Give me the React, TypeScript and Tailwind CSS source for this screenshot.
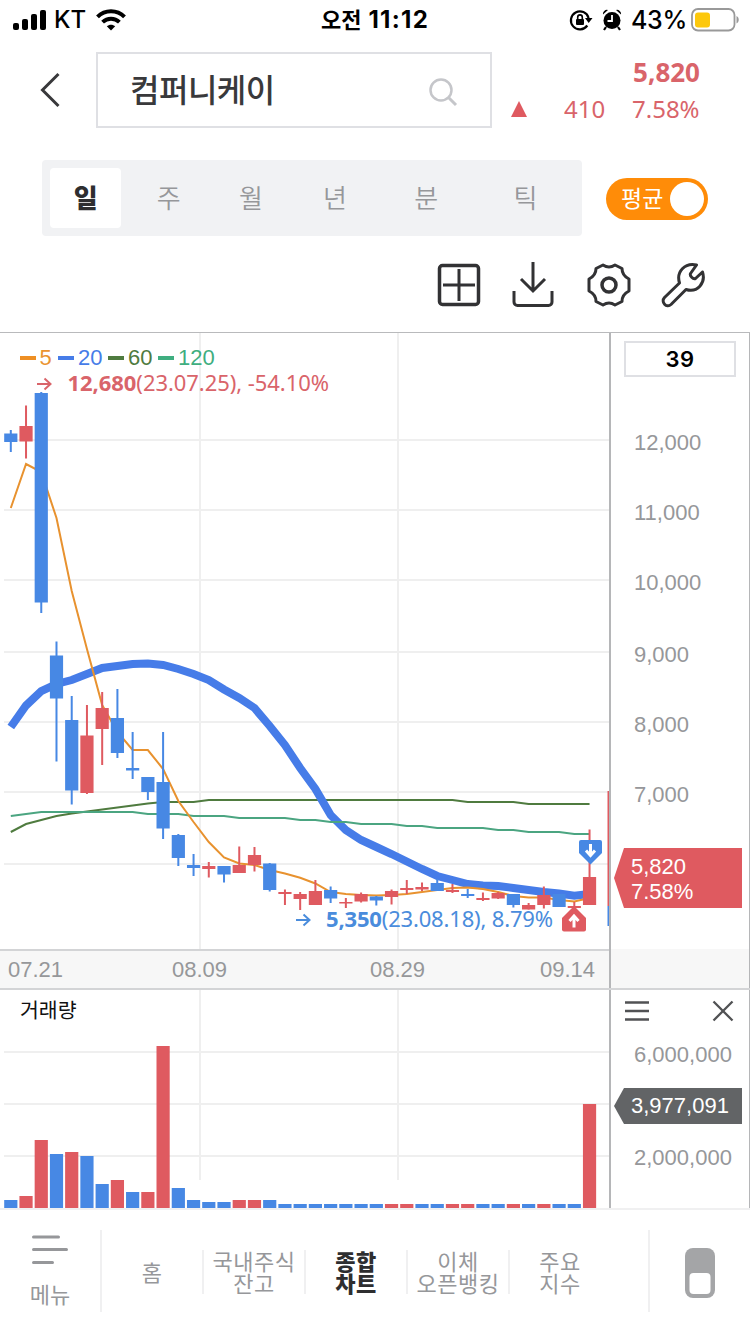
import React from 'react';

const RED = '#df5a60';
const BLUE = '#4788e4';

const kr = 'font-["Noto_Sans","Noto_Sans_CJK_KR",sans-serif]';
const helv = 'font-["Liberation_Sans","Noto_Sans_CJK_KR",sans-serif]';

// x centre of the nth bar
const barX = (i: number) => 10.8 + i * 15.23;

// [up, bodyTop, bodyBottom, wickTop, wickBottom]
const candles: [number, number, number, number, number][] = [
  [0, 433.5, 442, 430, 452],
  [1, 426, 441.5, 405.5, 458.5],
  [0, 393, 602.5, 392, 613],
  [0, 655.5, 698.5, 641.5, 761.5],
  [0, 720, 790.5, 696, 804.5],
  [1, 735.5, 793, 705, 794],
  [1, 708, 729, 692, 765],
  [0, 718, 753, 689, 758],
  [0, 768, 770.5, 732, 779],
  [0, 777, 792, 777, 800],
  [0, 782, 828.5, 732, 839],
  [0, 835, 858, 834, 866],
  [0, 865, 868, 854, 876],
  [1, 866, 869, 862, 877.5],
  [0, 866, 874.5, 866, 882.5],
  [1, 865, 873, 846.5, 873],
  [1, 855, 865, 847, 871.5],
  [0, 863.5, 890, 863, 891.5],
  [1, 892, 894, 889.5, 905],
  [1, 894, 899, 892, 910],
  [1, 891, 905, 880, 905],
  [0, 890, 898.5, 886.5, 903],
  [1, 902, 903.5, 898, 908],
  [1, 894, 901.5, 892.5, 902.5],
  [0, 896.5, 900.5, 896, 905.5],
  [1, 891, 897, 889.5, 904.5],
  [1, 888, 890, 880, 894],
  [1, 887, 889.5, 882.5, 891],
  [0, 883, 891, 879, 891],
  [1, 890, 892, 884, 893],
  [0, 894, 896, 889, 898],
  [1, 898, 900, 892.5, 901],
  [1, 893, 898.5, 892, 899],
  [0, 894, 905, 894, 907.5],
  [1, 905, 909.5, 903, 909.5],
  [1, 895, 905, 886.5, 908.5],
  [0, 894, 907, 894, 907],
  [1, 906, 908, 902, 912],
  [1, 877, 905, 829.5, 905],
];

const ma5 = [
  508, 464, 472, 518, 591, 649, 705, 732, 750, 750, 769, 801, 822, 842, 857.5, 863.5, 865, 870, 873.5, 877.7,
  883.5, 892, 894, 895, 895.5, 895, 894, 892, 890, 888, 887.5, 889, 892, 896, 897.5, 897.5, 900, 901.5, 898,
];
const ma20 = [
  727, 705.5, 691, 684, 680, 674, 668, 666, 664, 663.5, 665, 669, 674, 680, 689.5, 698, 708, 726, 745, 768,
  789, 815, 830, 840, 847, 854, 861.5, 869, 876, 880, 884, 885.5, 886, 888, 890, 892, 893.5, 895.7, 894,
];
const ma60 = [
  832, 824, 820, 816, 813.5, 811.5, 809.5, 807.5, 805.5, 803.5, 802, 802, 802, 800, 800, 800, 800, 800, 800, 800,
  800, 800, 800, 800, 800, 800, 800, 800, 800, 800, 802, 802, 802, 802, 804, 804, 804, 804, 804,
];
const ma120 = [
  816, 814, 812, 812, 812, 812, 812, 812, 812, 814, 814, 814, 816, 816, 816, 818, 818, 818, 818, 820,
  820, 822, 822, 824, 824, 824, 826, 826, 828, 828, 828, 828, 830, 830, 832, 832, 832, 834, 834,
];

// [up, top]
const volumes: [number, number][] = [
  [0, 1200], [1, 1196], [1, 1140], [0, 1154], [1, 1152], [0, 1156], [0, 1184], [1, 1180], [0, 1192], [1, 1192],
  [1, 1046], [0, 1188], [0, 1200], [0, 1202], [0, 1202], [1, 1200], [1, 1200], [0, 1200], [0, 1204], [0, 1204],
  [0, 1204], [0, 1204], [0, 1204], [0, 1204], [0, 1204], [1, 1204], [1, 1204], [0, 1204], [0, 1204], [1, 1204],
  [1, 1204], [0, 1204], [0, 1204], [1, 1204], [0, 1204], [1, 1204], [0, 1204], [0, 1204], [1, 1104],
];

const toPoints = (ys: number[]) => ys.map((y, i) => `${barX(i)},${y}`).join(' ');

const StatusBar = () => (
  <div className='grid h-10 grid-cols-[250px_1fr_250px] items-center font-["Inter","Noto_Sans_CJK_KR",sans-serif] text-black'>
    <div className="flex items-center pl-[13px]">
      <svg width="33" height="20" viewBox="0 0 33 20">
        <rect x="0" y="13" width="6" height="7" rx="2" />
        <rect x="9" y="9" width="6" height="11" rx="2" />
        <rect x="18" y="4" width="6" height="16" rx="2" />
        <rect x="27" y="0" width="6" height="20" rx="2" />
      </svg>
      <span className="ml-2 w-[31px] text-[24px] font-medium leading-10">KT</span>
      <svg className="ml-[11px]" width="30" height="22" viewBox="0 0 30 22" fill="none" stroke="#000" strokeWidth="4">
        <path d="M1.500 7.800C9 .3 21 .3 28.500 7.800" />
        <path d="M6.600 13.100c4.800-4.500 12-4.500 16.800 0" />
        <path d="M15 21.500l-4.200-4.200c2.200-2.100 6.200-2.100 8.400 0z" fill="#000" stroke="none" />
      </svg>
    </div>
    <div className="flex items-center justify-center font-bold leading-10">
      <span className="text-[22px]">오전</span>
      <span className="ml-[7px] text-[24px] tracking-[1.3px]">11:12</span>
    </div>
    <div className="flex items-center pl-[69px]">
      <svg width="24" height="22" viewBox="0 0 24 22" fill="none" stroke="#000" strokeWidth="2.200">
        <path d="M18.300 16.500A9 9 0 1 1 19.600 9" />
        <path d="M16 9h7.500l-3.800 5z" fill="#000" stroke="none" />
        <rect x="7" y="10" width="8" height="6" rx="1" fill="#000" stroke="none" />
        <path d="M8.700 10V8.200a2.300 2.300 0 0 1 4.600 0V10" strokeWidth="1.600" />
      </svg>
      <svg className="ml-[9px]" width="20" height="22" viewBox="0 0 20 22">
        <circle cx="10" cy="11.500" r="8.500" />
        <path d="M1 5.500A4 4 0 0 1 6 1zM19 5.500A4 4 0 0 0 14 1z" />
        <path d="M4 18l-2 3M16 18l2 3" stroke="#000" strokeWidth="2.200" />
        <path d="M10 6v6H5.500" fill="none" stroke="#fff" strokeWidth="1.800" />
      </svg>
      <span className="ml-[9px] w-[55px] text-[25px] font-medium leading-10 tracking-[-0.3px]">43%</span>
      <svg className="ml-[5px]" width="49" height="24" viewBox="0 0 49 24">
        <rect x="1" y="1" width="42.500" height="21.500" rx="6" fill="none" stroke="#999" strokeWidth="1.800" />
        <rect x="4" y="4.500" width="15" height="15" rx="3" fill="#fdc80c" />
        <path d="M45.500 8c3 1.500 3 6 0 7.500z" fill="#999" />
      </svg>
    </div>
  </div>
);

const Header = () => (
  <div className={`mt-3 flex h-[76px] ${kr}`}>
    <svg className="ml-10 mt-5" width="21" height="36" viewBox="0 0 21 36" fill="none" stroke="#39393b" strokeWidth="3">
      <path d="M18.500 2L2.500 18l16 16" />
    </svg>
    <div className="ml-[35px] flex h-[76px] w-[396px] items-center justify-between border-2 border-[#dfe0e4] pl-8 pr-8">
      <span className="pb-px text-[32px] font-medium tracking-[-0.5px] text-[#39393b]">컴퍼니케이</span>
      <svg className="mt-1" width="30" height="30" viewBox="0 0 30 30" fill="none" stroke="#c5c6ca" strokeWidth="2.500">
        <circle cx="13" cy="13" r="10.500" />
        <path d="M20.500 20.500L28 28" strokeWidth="3" />
      </svg>
    </div>
    <div className="ml-[18px] w-[190px] text-[#d9646a]">
      <div className="text-right text-[26px] font-bold leading-[41px]">5,820</div>
      <div className="flex items-center text-[24px] leading-8">
        <svg width="17" height="16" viewBox="0 0 17 16">
          <path d="M9 0L17 16H1z" fill={RED} />
        </svg>
        <span className="ml-[37px] w-[68px]">410</span>
        <span>7.58%</span>
      </div>
    </div>
  </div>
);

const Tabs = () => (
  <div className={`mt-8 flex items-center pl-[42px] ${kr}`}>
    <div className="flex h-[76px] w-[540px] items-center rounded-[4px] bg-[#f1f2f4] pl-2 text-[26px] text-[#96979a]">
      <span className="flex h-[60px] w-[72px] items-center justify-center rounded-[4px] bg-white font-black text-[#2e2e30]">일</span>
      <span className="w-[95px] text-center font-[350]">주</span>
      <span className="w-[71px] text-center font-[350]">월</span>
      <span className="w-[98px] text-center font-[350]">년</span>
      <span className="w-[86px] text-center font-[350]">분</span>
      <span className="w-[114px] text-center font-[350]">틱</span>
    </div>
    <div className="ml-6 mt-0.5 flex h-[42px] w-[102px] items-center justify-between rounded-full bg-[#ff8c08] pl-[15px] pr-1">
      <span className="pb-[3px] text-[23px] leading-8 text-white">평균</span>
      <span className="size-[34px] rounded-full bg-white" />
    </div>
  </div>
);

const Tools = () => (
  <div className="mt-[25px] flex h-12 items-center pl-[437px]">
    <svg width="44" height="44" viewBox="0 0 44 44" fill="none" stroke="#323234" strokeWidth="3">
      <rect x="2.500" y="2.500" width="39" height="39" rx="3" strokeWidth="3.500" />
      <path d="M22 6v32M6 22h32" />
    </svg>
    <svg className="ml-[31px]" width="42" height="46" viewBox="0 0 42 46" fill="none" stroke="#323234" strokeWidth="3">
      <path d="M21 0v29M9 17l12 12 12-12M2 29v11c0 2 1.500 3.500 3.500 3.500h31c2 0 3.500-1.500 3.500-3.500V29" />
    </svg>
    <svg className="ml-[33px]" width="44" height="44" viewBox="0 0 44 44" fill="none" stroke="#323234" strokeWidth="3" strokeLinejoin="round">
      <path d="M16 2Q22 6 28 2L35 5.500Q35 12.500 42 16V28Q35 31.500 35 38.500L28 42Q22 38 16 42L9 38.500Q9 31.500 2 28V16Q9 12.500 9 5.500Z" />
      <circle cx="22" cy="22" r="7" strokeWidth="3.500" />
    </svg>
    <svg className="ml-[30px]" width="46" height="46" viewBox="0 0 46 46" fill="none" stroke="#323234" strokeWidth="3" strokeLinejoin="round">
      <path d="M35.500 3C24 .5 15 9.500 18.500 21L3.500 35.500c-4 4.500 2 11 6.500 7L25 27.500C36.500 31 45 21 41.500 10l-7 6.500c-2.500 1-6-2.500-5-5z" />
    </svg>
  </div>
);

const PriceChart = () => (
  <svg className="block" width="609" height="618" viewBox="0 332 609 618">
    <g stroke="#efefef" strokeWidth="2">
      {[440, 510, 580, 652, 722, 792, 864].map((y) => (
        <path key={y} d={`M4 ${y}H609`} />
      ))}
      <path d="M200 333V950M398 333V950" />
    </g>

    <g fill="none" strokeWidth="2">
      <polyline points={toPoints(ma60)} stroke="#4f7b3f" />
      <polyline points={toPoints(ma20)} stroke="#467ce8" strokeWidth="8" />
      <polyline points={toPoints(ma120)} stroke="#4ba581" />
      <polyline points={toPoints(ma5)} stroke="#e8922f" />
    </g>

    {candles.map(([up, top, bottom, high, low], i) => (
      <g key={i} fill={up ? RED : BLUE}>
        <rect x={barX(i) - 1} y={high} width="2" height={low - high} />
        <rect x={barX(i) - 6.6} y={top} width="13.2" height={bottom - top} />
      </g>
    ))}

    {/* Sell / buy markers */}
    <path d="M581 840h19q2 0 2 2v11l-11.500 11.500L579 853v-11q0-2 2-2z" fill={BLUE} />
    <path d="M590.500 844v11m-4.500-4.500l4.500 5 4.500-5" fill="none" stroke="#fff" strokeWidth="3" />
    <path d="M574 906l12 12v11.500q0 2-2 2h-20q-2 0-2-2V918z" fill={RED} />
    <path d="M574 927.500v-11m-4.500 4.500l4.500-5 4.500 5" fill="none" stroke="#fff" strokeWidth="3" />

    {/* Moving average legend */}
    <g className={helv} fontSize="22">
      <path d="M20 358h16" stroke="#ee8f24" strokeWidth="4" />
      <text x="39.500" y="365" fill="#ea9430">5</text>
      <path d="M58 358h16" stroke="#467ce8" strokeWidth="4" />
      <text x="78" y="365" fill="#467ce8">20</text>
      <path d="M108 358h16" stroke="#4f7b3f" strokeWidth="4" />
      <text x="128" y="365" fill="#4f7b3f">60</text>
      <path d="M158 358h16" stroke="#3fae80" strokeWidth="4" />
      <text x="178" y="365" fill="#3fae80">120</text>
    </g>

    <g className={kr} fontSize="22" fill="#d9646a">
      <path d="M37 384h13.500m-6-5.500l6 5.500-6 5.500" fill="none" stroke="#d9646a" strokeWidth="2" />
      <text x="67.500" y="391" textLength="261.500">
        <tspan fontWeight="700">12,680</tspan>(23.07.25), -54.10%
      </text>
    </g>
    <g className={kr} fontSize="22" fill="#4a8cdc">
      <path d="M296 920h13.500m-6-5.500l6 5.500-6 5.500" fill="none" stroke="#4a8cdc" strokeWidth="2" />
      <text x="326" y="927" textLength="227">
        <tspan fontWeight="700">5,350</tspan>(23.08.18), 8.79%
      </text>
    </g>

    <path d="M608.500 791v115" stroke={RED} strokeWidth="2" />
    <path d="M608.500 906v20" stroke={BLUE} strokeWidth="2" />
  </svg>
);

const PriceAxis = () => (
  <div className="relative h-[618px] w-[138px] pt-2 text-[22px] text-[#96979a]">
    <div className='ml-[13px] flex h-9 w-28 items-center justify-center border-2 border-[#dfe0e4] font-["Inter",sans-serif] font-semibold tracking-[0.5px] text-black'>
      39
    </div>
    <div className="mt-[53px] pl-[23px] leading-[26px]">
      <div className="mb-11">12,000</div>
      <div className="mb-11">11,000</div>
      <div className="mb-[46px]">10,000</div>
      <div className="mb-11">9,000</div>
      <div className="mb-11">8,000</div>
      <div>7,000</div>
    </div>
    <div className="absolute left-[3px] top-[515px] h-[60px] w-32">
      <svg className="absolute inset-0" width="128" height="60" viewBox="0 0 128 60">
        <path d="M10 0H128V60H10L0 30z" fill={RED} />
      </svg>
      <div className="relative pl-[17px] pt-1.5 leading-[25px] text-white">
        <div>5,820</div>
        <div>7.58%</div>
      </div>
    </div>
  </div>
);

const VolumeChart = () => (
  <svg className="block" width="609" height="218" viewBox="0 990 609 218">
    <g stroke="#efefef" strokeWidth="2">
      <path d="M4 1052H609M4 1104H609M4 1156H609M200 990V1180M398 990V1180" />
    </g>
    {volumes.map(([up, top], i) => (
      <rect key={i} x={barX(i) - 6.6} y={top} width="13.2" height={1208 - top} fill={up ? RED : BLUE} />
    ))}
    <text className={kr} x="20" y="1018" fontSize="20.500" fill="#111">거래량</text>
  </svg>
);

const VolumeAxis = () => (
  <div className="h-[218px] w-[138px] text-[22px] leading-[26px] text-[#96979a]">
    <div className="flex items-center justify-between pl-3.5 pr-[15px] pt-2.5">
      <svg width="24" height="22" viewBox="0 0 24 22" stroke="#515254" strokeWidth="2.500">
        <path d="M0 2.500h24M0 11h24M0 19.500h24" />
      </svg>
      <svg width="22" height="22" viewBox="0 0 22 22" stroke="#515254" strokeWidth="2.300">
        <path d="M1.500 1.500l19 19M20.500 1.500l-19 19" />
      </svg>
    </div>
    <div className="mt-5 pl-[23px]">6,000,000</div>
    <div className="relative ml-[3px] mt-5 h-9 w-32">
      <svg className="absolute inset-0" width="128" height="36" viewBox="0 0 128 36">
        <path d="M10 0H128V36H10L0 18z" fill="#626466" />
      </svg>
      <div className="relative pl-[17px] leading-9 text-white">3,977,091</div>
    </div>
    <div className="mt-[21px] pl-[23px]">2,000,000</div>
  </div>
);

const ChartArea = () => (
  <div className={`mt-[23px] border-t border-[#b9babc] ${helv}`}>
    <div className="-mt-px flex">
      <PriceChart />
      <div className="mt-px w-0.5 shrink-0 bg-[#b5b6b8]" />
      <div className="mt-px -mb-px border-r border-[#b5b6b8]"><PriceAxis /></div>
    </div>
    <div className="-mt-px flex h-[41px] border-b-2 border-[#d3d4d6] text-[22px] leading-[38px] text-[#96979a]">
      <div className="flex w-[609px] border-t-2 border-[#d3d4d6] bg-[#f7f7f7] pl-2 leading-[37px]">
        <span className="w-[164px]">07.21</span>
        <span className="w-[198px]">08.09</span>
        <span className="w-[170px]">08.29</span>
        <span>09.14</span>
      </div>
      <div className="w-0.5 bg-[#b5b6b8]" />
      <div className="grow border-r border-[#b5b6b8] bg-[#f7f7f7]" />
    </div>
    <div className="flex border-b-2 border-[#f0f0f1]">
      <VolumeChart />
      <div className="w-0.5 shrink-0 bg-[#b5b6b8]" />
      <div className="border-r border-[#b5b6b8]"><VolumeAxis /></div>
    </div>
  </div>
);

const BottomNav = () => (
  <div className={`flex h-[124px] items-start text-[22px] text-[#96979a] ${kr}`}>
    <div className="mt-5 flex h-[82px] w-[102px] flex-col border-r-2 border-[#f0f0f1]">
      <svg className="ml-8 mt-[5px]" width="36" height="30" viewBox="0 0 36 30" stroke="#96979a" strokeWidth="3" strokeLinecap="round">
        <path d="M1.500 2h25M1.500 14.500h33M1.500 27.500h19" />
      </svg>
      <span className="mt-[18px] w-[100px] text-center leading-[22px]">메뉴</span>
    </div>
    <div className="mt-10 flex h-11 items-center text-center leading-[22px] tracking-[0.5px]">
      <div className="flex h-11 w-[102px] items-center justify-center border-r-2 border-[#f0f0f1]">홈</div>
      <div className="h-11 w-[102px] border-r-2 border-[#f0f0f1]">국내주식<br />잔고</div>
      <div className="h-11 w-[102px] border-r-2 border-[#f0f0f1] font-black text-[#2e2e30]">종합<br />차트</div>
      <div className="h-11 w-[102px] border-r-2 border-[#f0f0f1]">이체<br />오픈뱅킹</div>
      <div className="h-11 w-[100px]">주요<br />지수</div>
    </div>
    <div className="ml-[38px] mt-5 h-[82px] border-l-2 border-[#f0f0f1] pl-[35px] pt-[18px]">
      <svg width="30" height="50" viewBox="0 0 30 50">
        <rect width="30" height="50" rx="8" fill="#a4a5a7" />
        <rect x="4.500" y="25" width="21" height="21" rx="4" fill="#fff" />
      </svg>
    </div>
  </div>
);

export default function App() {
  return (
    <div className="h-[1334px] w-[750px] overflow-hidden bg-white">
      <StatusBar />
      <Header />
      <Tabs />
      <Tools />
      <ChartArea />
      <BottomNav />
    </div>
  );
}
